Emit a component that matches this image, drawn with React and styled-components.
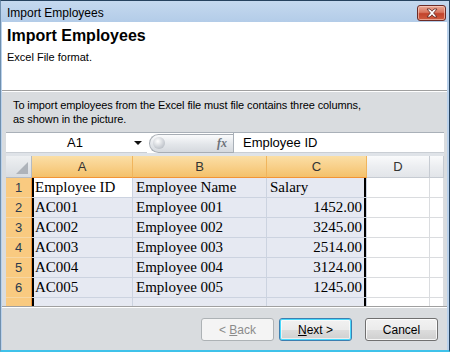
import styled, { createGlobalStyle } from "styled-components";

const GlobalStyle = createGlobalStyle`
  html, body { margin: 0; padding: 0; background: #fff; }
  body { font-family: "Liberation Sans", Arial, sans-serif; }
  * { box-sizing: border-box; }
`;

const columns = [
    { key: "A", selected: true },
    { key: "B", selected: true },
    { key: "C", selected: true },
    { key: "D", selected: false },
    { key: "E", selected: false, label: "" },
];

const rows = [
    ["Employee ID", "Employee Name", "Salary"],
    ["AC001", "Employee 001", "1452.00"],
    ["AC002", "Employee 002", "3245.00"],
    ["AC003", "Employee 003", "2514.00"],
    ["AC004", "Employee 004", "3124.00"],
    ["AC005", "Employee 005", "1245.00"],
    ["", "", ""],
];

export default function App() {
    return (
        <>
            <GlobalStyle />
            <Window>
                <TitleBar>
                    <TitleText>Import Employees</TitleText>
                    <CloseButton>
                        <svg width="14" height="10" viewBox="0 0 14 10">
                            <path
                                d="M2 1 L5 1 L7 3.2 L9 1 L12 1 L8.6 5 L12 9 L9 9 L7 6.8 L5 9 L2 9 L5.4 5 Z"
                                fill="#fff"
                                stroke="#5a2320"
                                strokeWidth="0.8"
                                strokeLinejoin="round"
                            />
                        </svg>
                    </CloseButton>
                </TitleBar>
                <Client>
                    <Header>
                        <HeaderTitle>Import Employees</HeaderTitle>
                        <HeaderSub>Excel File format.</HeaderSub>
                    </Header>
                    <Body>
                        <Description>
                            To import employees from the Excel file must file
                            contains three columns,
                            <br />
                            as shown in the picture.
                        </Description>
                        <Sheet>
                            <FormulaBar>
                                <NameBox>
                                    <NameText>A1</NameText>
                                    <DropArrow />
                                </NameBox>
                                <GripArea>
                                    <Grip>
                                        <GripKnob />
                                        <FxLabel>fx</FxLabel>
                                    </Grip>
                                </GripArea>
                                <FormulaInput>Employee ID</FormulaInput>
                            </FormulaBar>
                            <Grid>
                                <Corner>
                                    <CornerTriangle />
                                </Corner>
                                {columns.map((col) => (
                                    <ColHeader
                                        key={col.key}
                                        $selected={col.selected}
                                    >
                                        {col.label ?? col.key}
                                    </ColHeader>
                                ))}
                                {rows.map((row, r) => (
                                    <Row key={r}>
                                        {/* the 7th row is only peeking in, no number shows */}
                                        <RowHeader>{r < 6 ? r + 1 : ""}</RowHeader>
                                        {row.map((value, c) => (
                                            <Cell
                                                key={c}
                                                $selected
                                                $active={r === 0 && c === 0}
                                                $left={c === 0}
                                                $right={c === 2}
                                                $align={
                                                    c === 2 && r > 0
                                                        ? "right"
                                                        : "left"
                                                }
                                            >
                                                {value}
                                            </Cell>
                                        ))}
                                        <Cell />
                                        <Cell />
                                    </Row>
                                ))}
                            </Grid>
                        </Sheet>
                    </Body>
                    <Footer>
                        <Button disabled>
                            &lt; <u>B</u>ack
                        </Button>
                        <Button $default>
                            <u>N</u>ext &gt;
                        </Button>
                        <CancelButton>Cancel</CancelButton>
                    </Footer>
                </Client>
            </Window>
        </>
    );
}

const Window = styled.div`
    width: 450px;
    height: 352px;
    display: flex;
    flex-direction: column;
    padding: 0 2px 0 1px;
    border-top: 1px solid #27435f;
    border-left: 1px solid #6f8fae;
    border-right: 1px solid #27435f;
    border-bottom: 2px solid #3fc2ea;
    background: linear-gradient(to bottom, #c5d9ef 0, #b3cce8 21px, #bad2ec 22px);
`;

const TitleBar = styled.div`
    height: 21px;
    display: flex;
    align-items: flex-start;
    justify-content: space-between;
    padding: 0 1px 0 5px;
`;

const TitleText = styled.div`
    font-size: 12px;
    line-height: 12px;
    margin-top: 6px;
    color: #000;
`;

const CloseButton = styled.div`
    width: 29px;
    height: 16px;
    margin-top: 4px;
    border: 1px solid #6b2b26;
    border-radius: 3px;
    background: linear-gradient(to bottom, #e9a996 0%, #d9765f 45%, #c2432c 55%, #d05d40 100%);
    box-shadow: inset 0 0 0 1px rgba(255, 220, 210, 0.55);
    display: flex;
    align-items: center;
    justify-content: center;
`;

const Client = styled.div`
    flex: 1;
    display: flex;
    flex-direction: column;
    background: #d9dcdf;
`;

const Header = styled.div`
    height: 69px;
    background: #fff;
    padding: 4px 5px 0;
    border-bottom: 1px solid #a0a0a0;
`;

const HeaderTitle = styled.div`
    font-size: 16px;
    font-weight: bold;
    line-height: 20px;
    color: #000;
`;

const HeaderSub = styled.div`
    font-size: 11px;
    line-height: 16px;
    margin-top: 3px;
    color: #000;
`;

const Body = styled.div`
    flex: 1;
    display: flex;
    flex-direction: column;
    border-top: 1px solid #fff;
    padding: 6px 3px 0 4px;
    overflow: hidden;
`;

const Description = styled.div`
    font-size: 11px;
    line-height: 14px;
    letter-spacing: -0.1px;
    color: #000;
    padding-left: 7px;
    height: 28px;
`;

const Sheet = styled.div`
    margin-top: 6px;
    height: 174px;
    display: flex;
    flex-direction: column;
    background: #dfe3e8;
    overflow: hidden;
`;

const FormulaBar = styled.div`
    height: 21px;
    display: flex;
    border-top: 1px solid #a9b0b8;
    margin-bottom: 3px;
`;

const NameBox = styled.div`
    width: 141px;
    background: #fff;
    border-bottom: 1px solid #c9ced4;
    display: flex;
    align-items: center;
    padding-right: 5px;
`;

const NameText = styled.div`
    flex: 1;
    text-align: center;
    font-size: 13px;
    color: #000;
    padding-left: 10px;
`;

const DropArrow = styled.div`
    width: 0;
    height: 0;
    border-left: 4px solid transparent;
    border-right: 4px solid transparent;
    border-top: 4px solid #111;
`;

const GripArea = styled.div`
    width: 87px;
    display: flex;
    align-items: center;
    padding-left: 2px;
    border-right: 1px solid #a9b0b8;
    background: #fff;
`;

const Grip = styled.div`
    flex: 1;
    height: 19px;
    display: flex;
    align-items: center;
    justify-content: space-between;
    padding: 0 6px 0 3px;
    border: 1px solid #a7adb4;
    border-right: none;
    border-radius: 10px 0 0 10px;
    background: linear-gradient(to bottom, #fafbfc, #e3e6ea 55%, #d5d9de);
`;

const GripKnob = styled.div`
    width: 12px;
    height: 12px;
    border-radius: 50%;
    background: radial-gradient(circle at 40% 35%, #ffffff, #c9cdd3 60%, #a8aeb6);
`;

const FxLabel = styled.div`
    font-family: "Liberation Serif", "Times New Roman", serif;
    font-style: italic;
    font-weight: bold;
    font-size: 12px;
    color: #6d7279;
`;

const FormulaInput = styled.div`
    flex: 1;
    background: #fff;
    border-bottom: 1px solid #c9ced4;
    font-size: 13px;
    line-height: 20px;
    padding-left: 9px;
    color: #000;
`;

const Grid = styled.div`
    display: grid;
    grid-template-columns: 26px 101px 134px 100px 63px 1fr;
    grid-template-rows: 22px;
    grid-auto-rows: 20px;
    background: #fff;
`;

const Row = styled.div`
    display: contents;
`;

const Corner = styled.div`
    position: relative;
    background: linear-gradient(to bottom, #eef0f2, #d8dce1);
    border-right: 1px solid #b5bbc2;
    border-bottom: 1px solid #b5bbc2;
`;

const CornerTriangle = styled.div`
    position: absolute;
    right: 3px;
    bottom: 3px;
    width: 0;
    height: 0;
    border-left: 12px solid transparent;
    border-bottom: 12px solid #aeb3ba;
`;

const ColHeader = styled.div`
    display: flex;
    align-items: center;
    justify-content: center;
    font-size: 13px;
    color: #333;
    background: ${(p) =>
        p.$selected
            ? "linear-gradient(to bottom, #fbdfa6, #f8d08a 50%, #f4c16a)"
            : "linear-gradient(to bottom, #f9fafb, #eceef1 50%, #e2e5e9)"};
    border-right: 1px solid ${(p) => (p.$selected ? "#f0b55d" : "#c6cbd2")};
    border-bottom: 1px solid ${(p) => (p.$selected ? "#f29436" : "#c6cbd2")};
`;

const RowHeader = styled.div`
    display: flex;
    align-items: center;
    justify-content: center;
    font-size: 13px;
    color: #2a3a4e;
    background: #f9ca80;
    border-right: 1px solid #f29436;
    border-bottom: 1px solid #f7d7a3;
`;

const Cell = styled.div`
    font-family: "Liberation Serif", "Times New Roman", serif;
    font-size: 15px;
    line-height: 19px;
    color: #000;
    white-space: nowrap;
    overflow: hidden;
    padding: 0 ${(p) => (p.$right ? "4px" : "2px")} 0 3px;
    text-align: ${(p) => p.$align || "left"};
    background: ${(p) => (p.$active ? "#fff" : p.$selected ? "#e6e9f2" : "#fff")};
    border-right: 1px solid ${(p) => (p.$selected ? "#ccd3e0" : "#dadcdf")};
    border-bottom: 1px solid ${(p) => (p.$selected ? "#ccd3e0" : "#dadcdf")};
    box-shadow: ${(p) =>
        p.$left ? "inset 2px 0 0 #000" : p.$right ? "inset -2px 0 0 #000" : "none"};
`;

const Footer = styled.div`
    height: 44px;
    display: flex;
    justify-content: flex-end;
    align-items: flex-start;
    padding: 11px 9px 0 0;
    border-top: 1px solid #a0a0a0;
    box-shadow: inset 0 1px 0 #fff;
    gap: 5px;
`;

const Button = styled.button`
    width: 73px;
    height: 23px;
    padding: 0;
    font-family: "Liberation Sans", Arial, sans-serif;
    font-size: 12px;
    color: #000;
    border: 1px solid ${(p) => (p.$default ? "#3c7fb1" : "#707070")};
    border-radius: 3px;
    background: linear-gradient(to bottom, #f2f2f2 0%, #ebebeb 50%, #dddddd 51%, #cfcfcf 100%);
    box-shadow: ${(p) =>
        p.$default
            ? "inset 0 0 0 1px #48d8fb, inset 0 0 0 2px rgba(255,255,255,0.6)"
            : "inset 0 0 0 1px rgba(255,255,255,0.8)"};

    &:disabled {
        color: #8b8b8b;
        border-color: #adb2b5;
        background: #f4f4f4;
        box-shadow: none;
    }

    u {
        text-decoration: underline;
    }
`;

const CancelButton = styled(Button)`
    margin-left: 8px;
`;
